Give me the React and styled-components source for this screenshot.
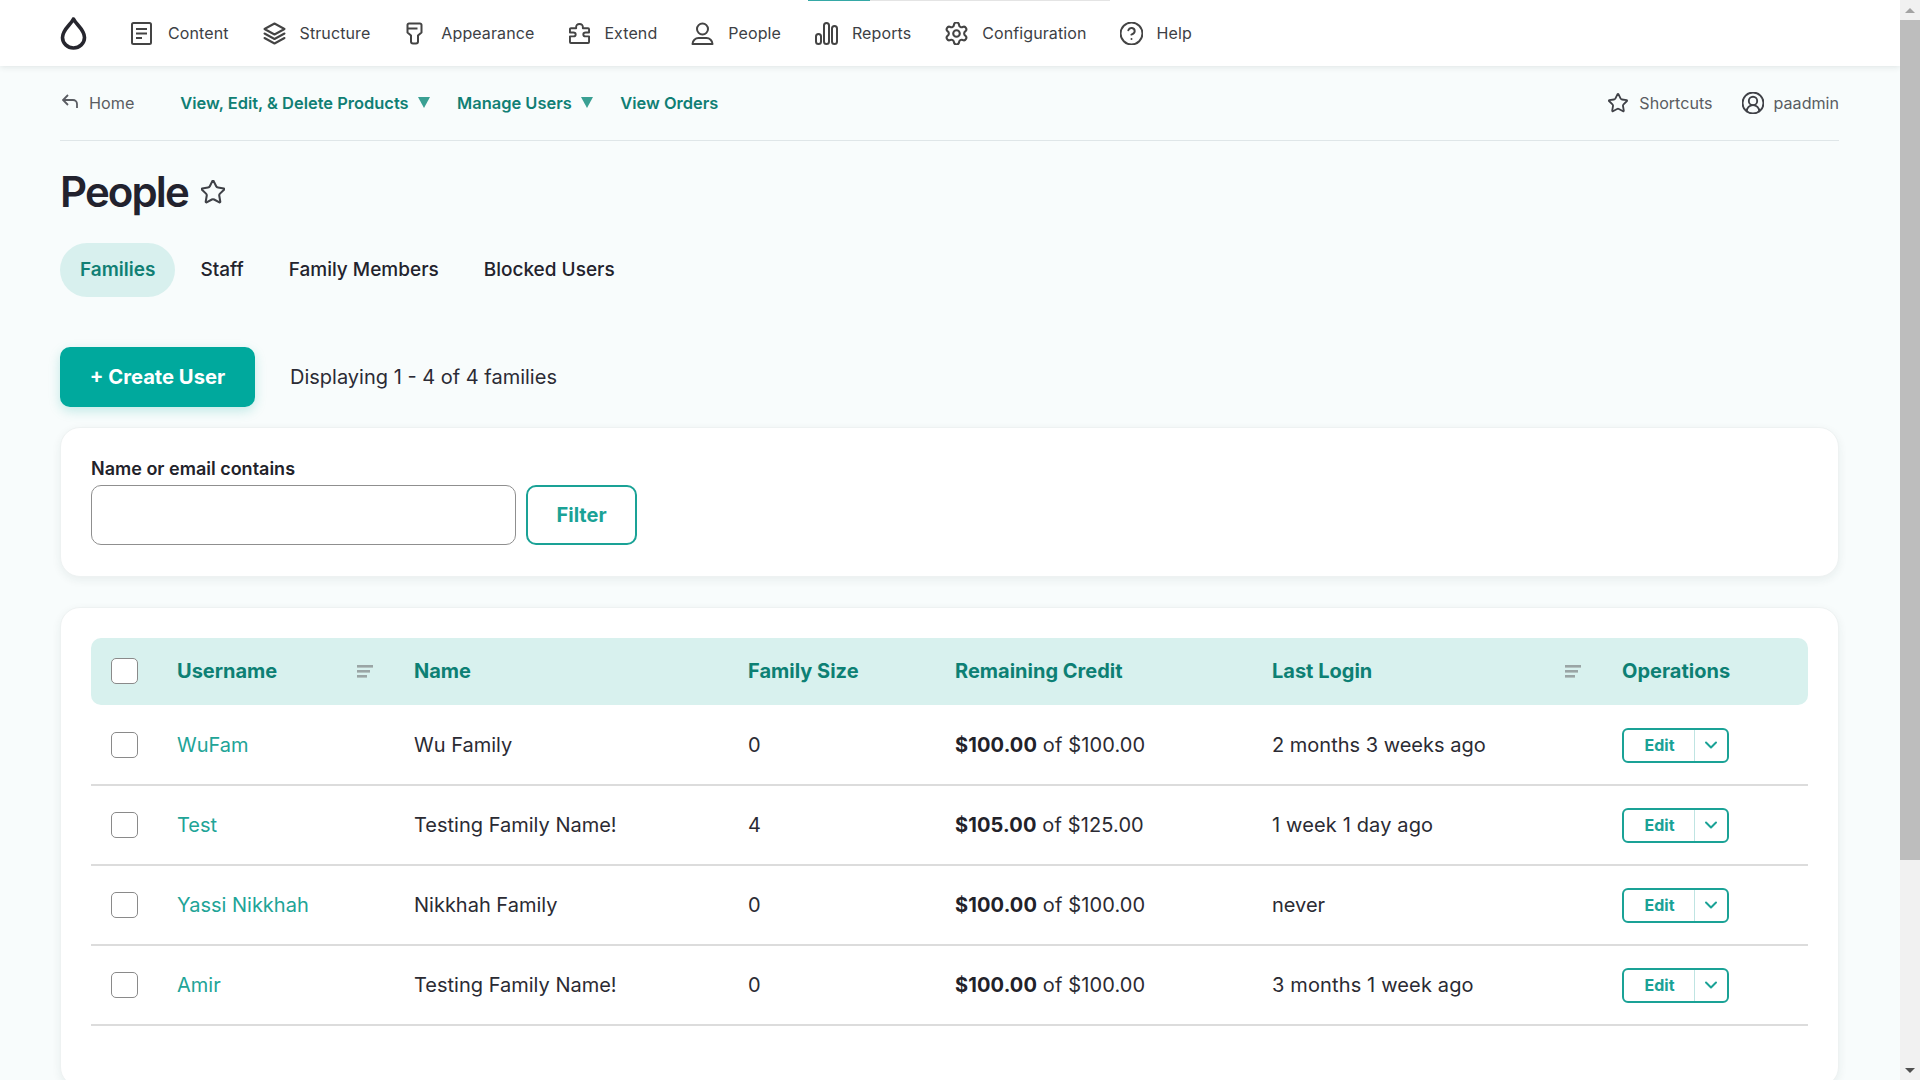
import React from "react";
import styled, { createGlobalStyle } from "styled-components";
import { Settings, CircleHelp, Star, CircleUserRound, ChevronDown } from "lucide-react";

const Global = createGlobalStyle`
  html, body { margin: 0; padding: 0; height: 100%; overflow: hidden; }
  * { box-sizing: border-box; }
  body { font-family: Inter, "Liberation Sans", sans-serif; background: #f7fbfb; color: #22222a; }
`;

const Shell = styled.div`display: flex; width: 1920px; height: 1080px; overflow: hidden;`;
const Main = styled.div`flex: 1; min-width: 0; height: 1080px; overflow: hidden; background: #f8fcfc;`;

const ScrollTrack = styled.div`width: 20px; height: 1080px; flex: none; background: #f1f1f1; display: flex; flex-direction: column; align-items: center;`;
const ScrollArrow = styled.div`
  height: 20px; width: 100%; display: flex; align-items: center; justify-content: center;
  &::before { content: ""; border-left: 5px solid transparent; border-right: 5px solid transparent;
    ${p => p.$down ? "border-top: 5px solid #505050;" : "border-bottom: 5px solid #a3a3a3;"} }
`;
const ScrollThumb = styled.div`width: 100%; height: 840px; background: #bdbdbd;`;
const ScrollGap = styled.div`flex: 1;`;

const TopBar = styled.header`
  position: relative; height: 66px; background: #fff; display: flex; align-items: center;
  padding-left: 60px; box-shadow: 0 1px 6px rgba(40,60,60,.12);
`;
const Progress = styled.div`
  position: absolute; top: 0; left: 808px; width: 302px; height: 1px; background: #e4e4e4;
  &::before { content: ""; position: absolute; left: 0; top: 0; height: 1px; width: 62px; background: #35a8a6; }
`;
const Logo = styled.svg`width: 27px; height: 34px; margin-right: 44px; flex: none;`;
const NavItem = styled.a`
  display: flex; align-items: center; gap: ${p => p.$gap ?? 14}px; margin-right: ${p => p.$mr ?? 35}px;
  font-size: 16px; color: #3d3f45; font-weight: 400; white-space: nowrap; letter-spacing: .1px;
  svg { flex: none; color: #444; }
`;

const SubNav = styled.div`
  height: 75px; margin: 0 61px 0 60px; display: flex; align-items: center; border-bottom: 1px solid #dfe6e8;
  font-size: 16.45px;
`;
const HomeLink = styled.a`
  display: flex; align-items: center; gap: 11px; color: #5a5c62; margin-right: 46px; padding-left: 2px; font-size: 16.2px;
  svg { position: relative; top: -2px; }
`;
const SubLink = styled.a`
  display: flex; align-items: center; color: #107f74; font-weight: 600; margin-right: 27.5px; white-space: nowrap;
`;
const Caret = styled.span`
  margin-left: 9px; width: 0; height: 0; border-left: 6px solid transparent; border-right: 6px solid transparent;
  border-top: 11px solid #3aa093; position: relative; top: -1px;
`;
const Spacer = styled.div`flex: 1;`;
const Utility = styled.a`
  display: flex; align-items: center; gap: ${p => p.$gap ?? 11}px; color: #5a5c62; margin-left: ${p => p.$ml ?? 0}px; font-size: 16.1px;
  svg { color: #3f4147; }
`;

const Content = styled.div`padding: 0 61px 0 60px;`;
const TitleRow = styled.div`display: flex; align-items: center; gap: 13px; height: 52px; margin-top: 25px;`;
const Title = styled.h1`margin: 0; font-size: 42px; font-weight: 600; letter-spacing: -1.9px; color: #22222e; line-height: 52px;`;
const Tabs = styled.nav`display: flex; margin-top: 25px; height: 54px; align-items: center; gap: 5px;`;
const Tab = styled.a`
  height: 54px; display: flex; align-items: center; padding: 0 20px 2px; border-radius: 27px; font-size: 19px;
  color: ${p => p.$active ? "#117f74" : "#23232d"};
  background: ${p => p.$active ? "#d8f0ee" : "transparent"};
  font-weight: ${p => p.$active ? 600 : 500};
`;
const ActionRow = styled.div`display: flex; align-items: center; margin-top: 50px; gap: 35px;`;
const Primary = styled.button`
  width: 195px; height: 60px; border: 0; border-radius: 10px; background: #00a99d; color: #fff; padding: 0 0 1px;
  font: 700 20.2px Inter, sans-serif; box-shadow: 0 4px 12px rgba(0,169,157,.22);
`;
const Count = styled.div`font-size: 20px; color: #2b2b35;`;
const Card = styled.section`
  background: #fff; border-radius: 20px; border: 1px solid #eef2f2;
  box-shadow: 0 3px 10px rgba(30,60,60,.07);
  padding: ${p => p.$pad}; margin-top: ${p => p.$mt}px;
`;
const Label = styled.label`display: block; font-size: 18px; font-weight: 600; color: #22222a; line-height: 22px;`;
const FilterRow = styled.div`display: flex; gap: 10px; margin-top: 5px;`;
const TextInput = styled.input`
  width: 425px; height: 60px; border: 1px solid #8f8f8f; border-radius: 10px; background: #fff; outline: none;
`;
const Outline = styled.button`
  width: 111px; height: 60px; border: 2px solid #1aa296; border-radius: 10px; background: #fff; color: #1aa296;
  font: 700 20px Inter, sans-serif;
`;
const GRID = "86px 237px 334px 207px 317px 350px 186px";
const HeadRow = styled.div`
  display: grid; grid-template-columns: ${GRID}; height: 67px; margin-bottom: 1px; align-items: center; padding-bottom: 1px;
  background: #d8f1ee; border-radius: 10px; color: #0d8074; font-size: 20px; font-weight: 700;
`;
const Row = styled.div`
  display: grid; grid-template-columns: ${GRID}; height: 80px; align-items: center;
  border-bottom: 2px solid #dcdcdc; font-size: 20px; color: #2b2b33;
`;
const CheckCell = styled.div`padding-left: 20px; display: flex;`;
const Check = styled.span`display: block; width: 27px; height: 26px; background: #fff; border: 1px solid #8a8a8a; border-radius: 5px;`;
const SortCell = styled.div`display: flex; align-items: center; justify-content: space-between; padding-right: ${p => p.$pr}px;`;
const SortIcon = styled.svg`width: 16px; height: 13px; flex: none;`;
const UserLink = styled.a`color: #21a497;`;
const CreditCell = styled.div`letter-spacing: .13px;`;
const LoginCell = styled.div`letter-spacing: ${p => p.$loose ? ".14px" : "0"};`;
const Strong = styled.strong`font-weight: 700; color: #22222a;`;
const SplitButton = styled.div`
  width: 107px; height: 35px; display: flex; border: 2px solid #1aa296; border-radius: 6px; background: #fff;
  color: #1aa296; font-size: 16px; font-weight: 700;
`;
const SplitMain = styled.div`flex: 1; display: flex; align-items: center; justify-content: center; border-right: 1px solid #bfe4e2; padding-left: 1px;`;
const SplitCaret = styled.div`width: 32px; display: flex; align-items: center; justify-content: center;`;

const ContentIcon = () => (
  <svg width="21" height="23" viewBox="0 0 21 23" fill="none" stroke="currentColor" strokeWidth="2">
    <rect x="1" y="1" width="19" height="21" rx="1.5" />
    <path d="M5 7h11M5 11.5h11M5 16h6" />
  </svg>
);
const LayersIcon = () => (
  <svg width="23" height="23" viewBox="0 0 23 23" fill="none" stroke="currentColor" strokeWidth="2" strokeLinejoin="round" strokeLinecap="round">
    <path d="M11.5 1.5 21.5 7l-10 5.5L1.5 7z" />
    <path d="M1.5 11.5l10 5.5 10-5.5" />
    <path d="M1.5 16l10 5.5 10-5.5" />
  </svg>
);
const BrushIcon = () => (
  <svg width="17" height="23" viewBox="0 0 17 23" fill="none" stroke="currentColor" strokeWidth="2" strokeLinejoin="round">
    <path d="M3 1.5h11a1.5 1.5 0 0 1 1.5 1.5v7.5l-3.5 3v6a2 2 0 0 1-2 2H7a2 2 0 0 1-2-2v-6l-3.5-3V3A1.5 1.5 0 0 1 3 1.5z" />
    <path d="M1.5 6.5h10" />
  </svg>
);
const PuzzleIcon = () => (
  <svg width="21" height="23" viewBox="0 0 22 22" fill="none" stroke="currentColor" strokeWidth="2" strokeLinejoin="round">
    <path d="M7.5 5.5C7 2 9 1 11 1c2 0 4 1 3.500 4.500H20a1 1 0 0 1 1 1V10h-3.500C15.500 10 15 11 15 12c0 1 .5 2 2.500 2H21v6a1 1 0 0 1-1 1H2a1 1 0 0 1-1-1v-6h3.500C6.500 14 7 13 7 12c0-1-.5-2-2.500-2H1V6.500a1 1 0 0 1 1-1z" />
  </svg>
);
const PersonIcon = () => (
  <svg width="23" height="23" viewBox="0 0 23 23" fill="none" stroke="currentColor" strokeWidth="2">
    <circle cx="11.5" cy="7" r="5.500" />
    <path d="M1.500 22c0-3.500 3-6 6-6h8c3 0 6 2.500 6 6z" strokeLinejoin="round" />
  </svg>
);
const BarsIcon = () => (
  <svg width="23" height="23" viewBox="0 0 23 23" fill="none" stroke="currentColor" strokeWidth="2">
    <rect x="1" y="12" width="5" height="10" rx="2.500" />
    <rect x="9" y="1" width="5" height="21" rx="2.500" />
    <rect x="17" y="4" width="5" height="18" rx="2.500" />
  </svg>
);
const BackIcon = () => (
  <svg width="16" height="14" viewBox="0 0 16 14" fill="none" stroke="currentColor" strokeWidth="1.800">
    <path d="M6 1 1 6l5 5M1 6h10a4 4 0 0 1 4 4v4" />
  </svg>
);
const Sort = () => (
  <SortIcon viewBox="0 0 16 13" fill="#9aa5a5">
    <rect x="0" y="0" width="16" height="2.600" />
    <rect x="0" y="5" width="13" height="2.600" />
    <rect x="0" y="10" width="10" height="2.600" />
  </SortIcon>
);

const rows = [
  ["WuFam", "Wu Family", "0", "$100.00", "$100.00", "2 months 3 weeks ago"],
  ["Test", "Testing Family Name!", "4", "$105.00", "$125.00", "1 week 1 day ago"],
  ["Yassi Nikkhah", "Nikkhah Family", "0", "$100.00", "$100.00", "never"],
  ["Amir", "Testing Family Name!", "0", "$100.00", "$100.00", "3 months 1 week ago"],
];

export default function App() {
  return (
    <>
      <Global />
      <Shell>
        <Main>
          <TopBar>
            <Progress />
            <Logo viewBox="0 0 27 34" fill="none" stroke="#26262e" strokeWidth="3.600">
              <path d="M13.500 3C11 8.500 2.500 13.500 2.500 21.500a11 10.500 0 0 0 22 0C24.500 13.500 16 8.500 13.500 3z" strokeLinejoin="round" />
            </Logo>
            <NavItem $gap={16} $mr={34}><ContentIcon />Content</NavItem>
            <NavItem $mr={36}><LayersIcon />Structure</NavItem>
            <NavItem $gap={18}><BrushIcon />Appearance</NavItem>
            <NavItem $mr={34}><PuzzleIcon />Extend</NavItem>
            <NavItem $mr={34}><PersonIcon />People</NavItem>
            <NavItem $mr={34}><BarsIcon />Reports</NavItem>
            <NavItem $mr={33}><Settings size={23} viewBox="1.500 1.500 21 21" strokeWidth={1.900} />Configuration</NavItem>
            <NavItem><CircleHelp size={23} viewBox="1.500 1.500 21 21" strokeWidth={1.800} />Help</NavItem>
          </TopBar>
          <SubNav>
            <HomeLink><BackIcon />Home</HomeLink>
            <SubLink>View, Edit, &amp; Delete Products<Caret /></SubLink>
            <SubLink>Manage Users<Caret /></SubLink>
            <SubLink>View Orders</SubLink>
            <Spacer />
            <Utility><Star size={20} viewBox="1 1 22 22" strokeWidth={2} />Shortcuts</Utility>
            <Utility $ml={29} $gap={10}><CircleUserRound size={22} viewBox="1.500 1.500 21 21" strokeWidth={1.800} />paadmin</Utility>
          </SubNav>
          <Content>
            <TitleRow>
              <Title>People</Title>
              <Star size={24} viewBox="1.500 1.500 21 21" strokeWidth={1.800} color="#3f4147" />
            </TitleRow>
            <Tabs>
              <Tab $active>Families</Tab>
              <Tab>Staff</Tab>
              <Tab>Family Members</Tab>
              <Tab>Blocked Users</Tab>
            </Tabs>
            <ActionRow>
              <Primary>+ Create User</Primary>
              <Count>Displaying 1 - 4 of 4 families</Count>
            </ActionRow>
            <Card $mt={20} $pad="30px 30px 31px">
              <Label>Name or email contains</Label>
              <FilterRow>
                <TextInput />
                <Outline>Filter</Outline>
              </FilterRow>
            </Card>
            <Card $mt={30} $pad="30px 30px 60px">
              <HeadRow>
                <CheckCell><Check /></CheckCell>
                <SortCell $pr={41}>Username<Sort /></SortCell>
                <div>Name</div>
                <div>Family Size</div>
                <div>Remaining Credit</div>
                <SortCell $pr={41}>Last Login<Sort /></SortCell>
                <div>Operations</div>
              </HeadRow>
              {rows.map(r => (
                <Row key={r[0]}>
                  <CheckCell><Check /></CheckCell>
                  <UserLink>{r[0]}</UserLink>
                  <div>{r[1]}</div>
                  <div>{r[2]}</div>
                  <CreditCell><Strong>{r[3]}</Strong> of {r[4]}</CreditCell>
                  <LoginCell $loose={r[5].includes("1")}>{r[5]}</LoginCell>
                  <SplitButton>
                    <SplitMain>Edit</SplitMain>
                    <SplitCaret><ChevronDown size={20} strokeWidth={2.400} /></SplitCaret>
                  </SplitButton>
                </Row>
              ))}
            </Card>
          </Content>
        </Main>
        <ScrollTrack>
          <ScrollArrow />
          <ScrollThumb />
          <ScrollGap />
          <ScrollArrow $down />
        </ScrollTrack>
      </Shell>
    </>
  );
}
